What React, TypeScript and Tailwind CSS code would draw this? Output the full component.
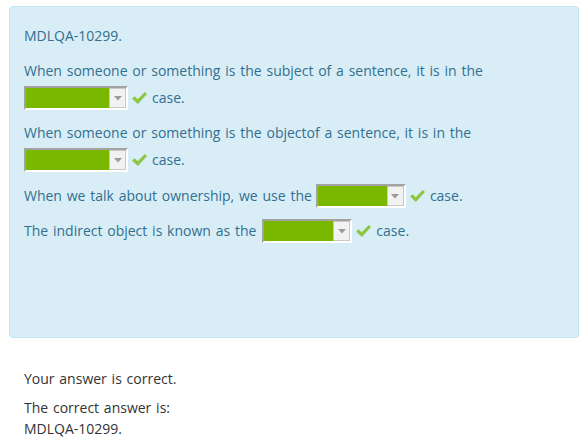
import React from "react";

function Check() {
  return (
    <svg width="15" height="12" viewBox="0 0 15 12" className="shrink-0">
      <path d="M0 6.6 L2.6 4.2 L5.7 7.3 L12.8 0 L15 2 L5.9 12 Z" fill="#8dc641" />
    </svg>
  );
}

function Sel({ w }: { w: number }) {
  return (
    <span
      className="inline-flex h-[24px] shrink-0 border-2 border-t-[#a3a3a3] border-l-[#a3a3a3] border-b-white border-r-white bg-[#7ab800]"
      style={{ width: w }}
    >
      <span className="flex-1" />
      <span className="flex h-[20px] w-[17px] items-center justify-center border border-[#c8c8c8] bg-[#f2f2f2]">
        <svg width="8" height="5" viewBox="0 0 8 5">
          <path d="M0 0 H8 L4 4.5 Z" fill="#9a9a9a" />
        </svg>
      </span>
    </span>
  );
}

function Ans({ w }: { w: number }) {
  return (
    <span className="inline-flex items-center">
      <Sel w={w} />
      <span className="ml-[4px] mr-[5px] flex items-center">
        <Check />
      </span>
      <span>case.</span>
    </span>
  );
}

export default function App() {
  return (
    <div
      className="w-[581px] h-[446px] bg-white text-[14px] leading-[20px] [word-spacing:1.15px]"
      style={{ fontFamily: '"Open Sans", "Liberation Sans", sans-serif' }}
    >
      <div className="pt-[6px] pl-[9px] pr-[2px]">
        <div className="h-[332px] rounded-[4px] border border-[#bce8f1] bg-[#d9edf7] px-[14px] pt-[19px] text-[#31708f]">
          <div className="h-[20px]">MDLQA-10299.</div>
          <div className="mt-[15px]">
            <div className="h-[20px]">When someone or something is the subject of a sentence, it is in the</div>
            <div className="mt-[5px] flex h-[24px] items-center">
              <Ans w={104} />
            </div>
          </div>
          <div className="mt-[13px]">
            <div className="h-[20px]">When someone or something is the objectof a sentence, it is in the</div>
            <div className="mt-[5px] flex h-[24px] items-center">
              <Ans w={104} />
            </div>
          </div>
          <div className="mt-[12px] flex h-[24px] items-center">
            <span className="mr-[4px]">When we talk about ownership, we use the</span>
            <Ans w={90} />
          </div>
          <div className="mt-[11px] flex h-[24px] items-center">
            <span className="mr-[6px]">The indirect object is known as the</span>
            <Ans w={90} />
          </div>
        </div>
      </div>
      <div className="pl-[24px] pt-[31px] text-[#333333]">
        <div className="h-[20px]">Your answer is correct.</div>
        <div className="mt-[8px] leading-[21px]">
          <div>The correct answer is:</div>
          <div>MDLQA-10299.</div>
        </div>
      </div>
    </div>
  );
}
